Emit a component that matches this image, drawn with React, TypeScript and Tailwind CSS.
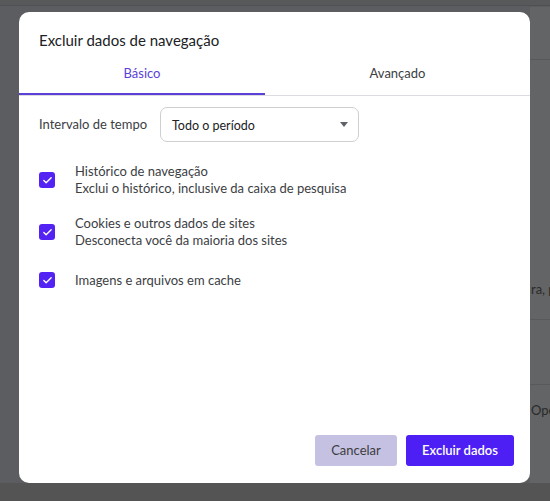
import { Check } from 'lucide-react';

const items = [
  { title: 'Histórico de navegação', sub: 'Exclui o histórico, inclusive da caixa de pesquisa' },
  { title: 'Cookies e outros dados de sites', sub: 'Desconecta você da maioria dos sites' },
  { title: 'Imagens e arquivos em cache', sub: '' },
];

export default function App() {
  return (
    <div
      className="relative h-[501px] w-[550px] overflow-hidden bg-[#5c5d60] text-[13px] text-[#202124]"
      style={{ fontFamily: 'Lato, "Noto Sans", sans-serif' }}
    >
      {/* dimmed page behind */}
      <div className="h-[6px] border-b border-[#4f5052] bg-[#58595b]" />
      <div className="absolute right-0 top-[7px] flex h-[494px] w-[20px] flex-col bg-[#636466]">
        <div className="h-[53px] border-b border-[#58595a]" />
        <div className="h-[260px] border-b border-[#58595a] pt-[220px] pl-[1px] text-[13px] text-[#2a2a2a] whitespace-nowrap">ra, p</div>
        <div className="h-[65px] border-b border-[#58595a]" />
        <div className="pt-[16px] pl-[1px] text-[13px] text-[#2a2a2a] whitespace-nowrap">Opc</div>
      </div>
      <div className="absolute bottom-0 left-0 h-[18px] w-full bg-[#545454]" />

      {/* dialog */}
      <div className="absolute left-[19px] top-[12px] flex h-[471px] w-[511px] flex-col rounded-[10px] bg-white">
        <h2 className="px-[20px] pt-[18px] text-[15px] leading-[20px] text-[#202124]">Excluir dados de navegação</h2>

        <div className="mt-[14px] flex border-b border-[#dadce0]">
          <div className="flex h-[31px] w-[246px] items-start justify-center border-b-2 border-[#5b3fd6] text-[#5b3fd6]">
            Básico
          </div>
          <div className="flex h-[31px] flex-1 items-start justify-center text-[#3c4043]">Avançado</div>
        </div>

        <div className="flex items-center px-[20px] pt-[11px]">
          <span className="w-[121px] text-[#3c4043]">Intervalo de tempo</span>
          <div className="flex h-[35px] w-[199px] items-center justify-between rounded-[7px] border border-[#cfcfcf] pl-[11px] pr-[10px] text-[12.5px]">
            <span className="pt-[3px]">Todo o período</span>
            <svg width="8" height="5" viewBox="0 0 8 5" className="mb-[1px]">
              <path d="M0 0h8L4 5z" fill="#5f6368" />
            </svg>
          </div>
        </div>

        <div className="flex flex-col gap-[18px] px-[20px] pt-[21px]">
          {items.map((it) => (
            <div key={it.title} className="flex min-h-[26px] items-center">
              <div className="flex h-[16px] w-[16px] items-center justify-center rounded-[3px] bg-[#5323f4]">
                <Check size={11} strokeWidth={3} color="white" />
              </div>
              <div className="ml-[20px] leading-[17px] text-[#3c4043]">
                <div>{it.title}</div>
                {it.sub && <div>{it.sub}</div>}
              </div>
            </div>
          ))}
        </div>

        <div className="mt-auto flex justify-end gap-[9px] px-[16px] pb-[17px]">
          <button className="h-[31px] w-[82px] rounded-[3px] bg-[#c5c1e3] text-[#3c3c3c]">Cancelar</button>
          <button className="h-[31px] w-[108px] rounded-[3px] bg-[#4d1ff5] font-semibold text-white">Excluir dados</button>
        </div>
      </div>
    </div>
  );
}
